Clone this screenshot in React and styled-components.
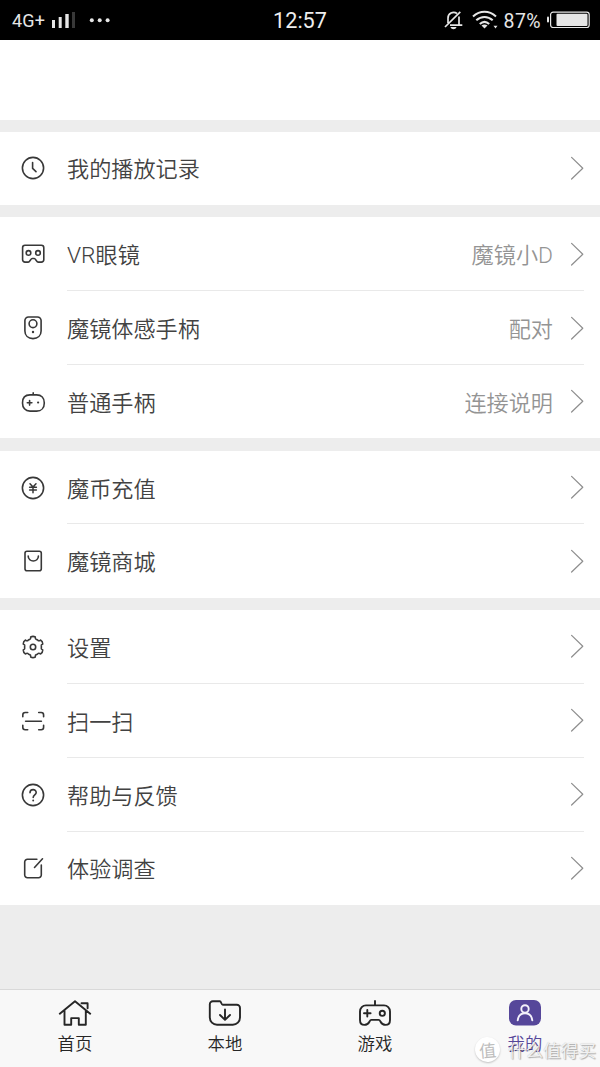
import React from 'react';
import styled, { createGlobalStyle, css } from 'styled-components';

const GlobalStyle = createGlobalStyle`
  * {
    box-sizing: border-box;
  }
  body {
    margin: 0;
    background: #ededed;
    font-family: 'Noto Sans CJK SC', sans-serif;
    font-weight: 350;
  }
`;

const Page = styled.div`
  display: flex;
  flex-direction: column;
  width: 600px;
  height: 1067px;
  overflow: hidden;
  background: #ededed;
`;

const StatusBar = styled.div`
  display: grid;
  grid-template-columns: 1fr auto 1fr;
  align-items: center;
  flex: none;
  height: 40px;
  padding: 0 10px 0 12px;
  background: #000;
  color: #e6e6e6;
  font-family: Roboto, sans-serif;
  font-weight: 400;
`;

const StatusGroup = styled.div`
  display: flex;
  align-items: center;
  justify-content: ${(props) => (props.$end ? 'flex-end' : 'flex-start')};
`;

const Network = styled.span`
  width: 39px;
  font-size: 18px;
  letter-spacing: 0.2px;
`;

const Clock = styled.span`
  padding: 2px 2px 0 0;
  font-size: 21.6px;
  line-height: 38px;
  color: #eee;
`;

const Percent = styled.span`
  margin: 0 6px 0 6px;
  padding-top: 2px;
  font-size: 19.5px;
  letter-spacing: 0.4px;
`;

const Header = styled.div`
  flex: none;
  height: 79.55px;
  background: #fff;
`;

const Section = styled.div`
  flex: none;
  margin-top: 12.22px;
  background: #fff;
`;

const Row = styled.div`
  display: flex;
  height: ${(props) => (props.$last ? '73.33px' : '73.89px')};
  padding: 0 16px 0 20px;
`;

const IconBox = styled.div`
  display: flex;
  align-items: center;
  width: 47px;
`;

const RowBody = styled.div`
  display: flex;
  align-items: center;
  flex: 1;
  border-bottom: 1px solid ${(props) => (props.$last ? 'transparent' : '#e9e9e9')};
`;

const Label = styled.span`
  flex: 1;
  padding-bottom: 1px;
  font-size: 22.15px;
  line-height: 32px;
  color: #424242;
`;

const Value = styled.span`
  padding-bottom: 1px;
  margin-right: 17px;
  font-size: 22.15px;
  line-height: 32px;
  color: #949494;
`;

const Latin = styled.span`
  font-family: Roboto, sans-serif;
  font-size: 22.8px;
  font-weight: ${(props) => props.$weight || 300};
  line-height: 1;
`;

const LineIcon = styled.svg`
  display: block;
  fill: none;
  stroke: ${(props) => props.$color || '#383838'};
  stroke-width: ${(props) => props.$weight || 1.6};
  stroke-linecap: round;
  stroke-linejoin: round;
`;

const TabBar = styled.div`
  display: flex;
  flex: none;
  height: 78px;
  margin-top: auto;
  border-top: 1px solid #d9d9d9;
  background: #f8f8f8;
`;

const Tab = styled.div`
  display: flex;
  flex-direction: column;
  align-items: center;
  flex: 1;
  padding-top: 8px;
  color: #262626;
  ${(props) =>
    props.$active &&
    css`
      color: #56479a;
    `}
`;

const TabLabel = styled.span`
  margin-top: 2px;
  font-size: 17.4px;
  line-height: 25px;
`;

// lies over the right end of the tab bar
const Watermark = styled.div`
  position: absolute;
  left: 475px;
  top: 1036px;
  display: flex;
  align-items: center;
  gap: 8px;
  width: 125px;
  height: 26px;
  white-space: nowrap;
  font-size: 17.6px;
  font-weight: 400;
  color: rgba(250, 250, 250, 0.9);
  text-shadow: 1px 1px 1px rgba(0, 0, 0, 0.28), 0 0 1px rgba(0, 0, 0, 0.25);
`;

const Seal = styled.span`
  display: flex;
  align-items: center;
  justify-content: center;
  width: 25px;
  height: 25px;
  border-radius: 50%;
  background: #fff;
  box-shadow: 0 1px 2px rgba(0, 0, 0, 0.22);
  color: #bdbdbd;
  font-size: 17px;
  transform: rotate(-5deg);
  text-shadow: none;
`;

const gearPath = () => {
  const at = (deg, r) => {
    const a = (deg * Math.PI) / 180;
    return `${(13 + r * Math.cos(a)).toFixed(2)} ${(13 + r * Math.sin(a)).toFixed(2)}`;
  };
  let d = `M${at(-103, 10.2)}`;
  for (let i = 0; i < 6; i++) {
    const a = -90 + i * 60;
    d += `Q${at(a, 11.3)} ${at(a + 13, 10.2)}`;
    d += `Q${at(a + 15, 8.2)} ${at(a + 23, 8.3)}`;
    d += `Q${at(a + 30, 8.7)} ${at(a + 37, 8.3)}`;
    d += `Q${at(a + 45, 8.2)} ${at(a + 47, 10.2)}`;
  }
  return `${d}Z`;
};

const icons = {
  history: (
    <>
      <circle cx="13" cy="13" r="10.6" />
      <path d="M12.6 7.6v5.8l3.4 3.2" />
    </>
  ),
  glasses: (
    <>
      <path d="M5 4.3h16.4a2.4 2.4 0 0 1 2.4 2.4v12a2.4 2.4 0 0 1-2.4 2.4h-3.2c-1.6 0-2.6-3.600-4-3.600h-2c-1.400 0-2.400 3.600-4 3.600H5a2.400 2.400 0 0 1-2.400-2.400v-12A2.400 2.400 0 0 1 5 4.300z" />
      <circle cx="8.500" cy="11.900" r="2.300" />
      <circle cx="18" cy="11.900" r="2.300" />
    </>
  ),
  remote: (
    <>
      <path d="M8.500 2h9a3.600 3.600 0 0 1 3.600 3.600V16c0 4.600-3.300 7.600-8.100 7.600S4.900 20.600 4.900 16V5.600A3.600 3.600 0 0 1 8.500 2z" />
      <circle cx="13" cy="8.700" r="3.900" />
      <path d="M13 17v.1" strokeWidth="2.400" />
    </>
  ),
  gamepad: (
    <>
      <path d="M10 5.900h6.600c4.800 0 7.700 3.200 7.700 8s-2.900 8.200-7.700 8.200H10c-4.800 0-7.500-3.400-7.500-8.200s2.700-8 7.500-8zM13.200 5.500V3.900" />
      <path d="M9.600 11.500v4.600M7.300 13.800h4.600" />
      <path d="M18 13.600h.2" strokeWidth="2" />
    </>
  ),
  coin: (
    <>
      <circle cx="13" cy="13" r="10.600" />
      <path d="M10 8.800l3 3.200 3-3.200M13 12v5.800M9.600 12.300h6.800M9.600 14.900h6.800" strokeWidth="1.500" />
    </>
  ),
  bag: (
    <>
      <rect x="5" y="3.200" width="16.300" height="19.500" rx="2" />
      <path d="M8.200 8c0 6.600 10.200 6.600 10.200 0" />
    </>
  ),
  settings: (
    <>
      <path d={gearPath()} />
      <circle cx="13" cy="13" r="2.700" />
    </>
  ),
  scan: (
    <path d="M7.700 4.500H5.200a2.400 2.400 0 0 0-2.400 2.400v1.800M18.700 4.500h2.500a2.400 2.400 0 0 1 2.400 2.400v1.800M7.700 21.700H5.200a2.400 2.400 0 0 1-2.400-2.400v-2M18.700 21.700h2.500a2.400 2.400 0 0 0 2.400-2.400v-2M5.600 13.200h15.800" />
  ),
  help: (
    <>
      <circle cx="13" cy="13" r="10.600" />
      <path d="M10 10.800c0-4.200 6.200-4.100 6.200-.3 0 2.300-3 2.500-3 5" />
      <path d="M13.200 18.400v.1" strokeWidth="1.900" />
    </>
  ),
  survey: <path d="M16.900 4.300H7.400a2.700 2.700 0 0 0-2.700 2.700v13a2.700 2.700 0 0 0 2.700 2.700h11.200a2.700 2.700 0 0 0 2.700-2.700V10M22.500 3.800l-8 8.700" />,
};

const tabIcons = {
  home: (
    <path d="M2.800 15.700L18 3.300l15.200 12.400M7.500 12.500v14.300h6.700v-6.700h7.600v6.700h7V12.500M24.500 5.300h6.100v5" />
  ),
  local: (
    <>
      <path d="M5.800 3.200h7c1.600 0 1.300 3.600 3 3.600h14a3.200 3.200 0 0 1 3.200 3.200v9.500a7.200 7.200 0 0 1-7.200 7.200H10a7.200 7.200 0 0 1-7.200-7.200V6.200a3 3 0 0 1 3-3z" />
      <path d="M18 11.500v10.300M13 17l5 4.900 5-4.900" />
    </>
  ),
  games: (
    <>
      <path d="M9 7.400h18a6 6 0 0 1 6 6V22c0 2.900-1.800 4.900-4.400 4.900-5.500 0-4.500-5-7-5h-7.200c-2.500 0-1.500 5-7 5C4.800 26.900 3 24.900 3 22v-8.600a6 6 0 0 1 6-6zM18 7V3" />
      <path d="M10.300 12v6.600M7 15.300h6.600" />
      <circle cx="25.300" cy="15.300" r="2.600" />
    </>
  ),
  mine: (
    <>
      <rect x="2" y="2" width="32" height="25.600" rx="7" fill="#56479a" stroke="none" />
      <circle cx="18" cy="10.900" r="3.700" />
      <path d="M10.700 22.300c.6-4.600 3.300-7 7.300-7s6.700 2.400 7.300 7" />
    </>
  ),
};

const sections = [
  [{ icon: 'history', label: '我的播放记录' }],
  [
    { icon: 'glasses', label: <><Latin>VR</Latin>眼镜</>, value: <>魔镜小<Latin $weight={350}>D</Latin></> },
    { icon: 'remote', label: '魔镜体感手柄', value: '配对' },
    { icon: 'gamepad', label: '普通手柄', value: '连接说明' },
  ],
  [
    { icon: 'coin', label: '魔币充值' },
    { icon: 'bag', label: '魔镜商城' },
  ],
  [
    { icon: 'settings', label: '设置' },
    { icon: 'scan', label: '扫一扫' },
    { icon: 'help', label: '帮助与反馈' },
    { icon: 'survey', label: '体验调查' },
  ],
];

const tabs = [
  { icon: 'home', label: '首页' },
  { icon: 'local', label: '本地' },
  { icon: 'games', label: '游戏' },
  { icon: 'mine', label: '我的' },
];

const SignalIcon = () => (
  <svg width="60" height="20" viewBox="0 0 60 20" fill="#e6e6e6">
    <rect x="1" y="10" width="3" height="8" />
    <rect x="7.700" y="7" width="3" height="11" />
    <rect x="14.300" y="4" width="3.400" height="14" />
    <rect x="21" y="2" width="3" height="16" fill="#383838" />
    <circle cx="40.800" cy="10.300" r="2" />
    <circle cx="48.700" cy="10.300" r="2" />
    <circle cx="56.600" cy="10.300" r="2" />
  </svg>
);

const BellSvg = styled.svg`
  margin-right: 9px;
`;

const MutedBellIcon = () => (
  <BellSvg width="19" height="20" viewBox="0 0 19 20" fill="none" stroke="#e6e6e6" strokeWidth="1.700">
    <path d="M4 13V8.200a5.600 5.600 0 0 1 9-4.700M15 6.500v8.700M6 15.200h12.300M1 17L16.300 1.800" />
    <path d="M6.500 17h6c-.8 3-5.200 3-6 0z" fill="#e6e6e6" stroke="none" />
  </BellSvg>
);

const WifiIcon = () => (
  <svg width="26" height="20" viewBox="0 0 26 20" fill="none" stroke="#e6e6e6" strokeWidth="2.100">
    <path d="M1 6.500c7-6.300 16-6.300 23 0M4.300 10.300c5-4.500 11.400-4.500 16.400 0M7.800 14c3-2.800 6.400-2.800 9.400 0" />
    <path d="M9.500 15.500c2-1.400 4-1.400 6 0l-3 3z" fill="#e6e6e6" stroke="none" />
    <path d="M21.500 15.800h4l-2 2.800z" fill="#e6e6e6" stroke="none" />
  </svg>
);

const BatteryIcon = () => (
  <svg width="43" height="18" viewBox="0 0 43 18" fill="none">
    <rect x="0" y="5.500" width="2" height="6" rx="1" fill="#e6e6e6" />
    <rect x="3.600" y="1.100" width="38.600" height="15.400" rx="2.500" stroke="#e6e6e6" strokeWidth="1.200" />
    <rect x="9.500" y="2.700" width="31" height="12.200" rx="1" fill="#e6e6e6" />
  </svg>
);

const MenuRow = ({ item, last }) => (
  <Row $last={last}>
    <IconBox>
      <LineIcon width="26" height="26" viewBox="0 0 26 26">
        {icons[item.icon]}
      </LineIcon>
    </IconBox>
    <RowBody $last={last}>
      <Label>{item.label}</Label>
      {item.value && <Value>{item.value}</Value>}
      <LineIcon width="14" height="24" viewBox="0 0 14 24" $color="#8e8e8e" $weight={1.2}>
        <path d="M1.600 1.400l11.200 10.800L1.600 23" />
      </LineIcon>
    </RowBody>
  </Row>
);

const App = () => {
  return (
    <>
      <GlobalStyle />
      <Page>
        <StatusBar>
          <StatusGroup>
            <Network>4G+</Network>
            <SignalIcon />
          </StatusGroup>
          <Clock>12:57</Clock>
          <StatusGroup $end>
            <MutedBellIcon />
            <WifiIcon />
            <Percent>87%</Percent>
            <BatteryIcon />
          </StatusGroup>
        </StatusBar>
        <Header />
        {sections.map((items, i) => (
          <Section key={i}>
            {items.map((item, j) => (
              <MenuRow key={item.icon} item={item} last={j === items.length - 1} />
            ))}
          </Section>
        ))}
        <TabBar>
          {tabs.map((tab) => (
            <Tab key={tab.icon} $active={tab.icon === 'mine'}>
              <LineIcon
                width="36"
                height="30"
                viewBox="0 0 36 30"
                $color={tab.icon === 'mine' ? '#f3f1fa' : '#262626'}
                $weight={1.9}
              >
                {tabIcons[tab.icon]}
              </LineIcon>
              <TabLabel>{tab.label}</TabLabel>
            </Tab>
          ))}
        </TabBar>
        <Watermark>
          <Seal>值</Seal>
          什么值得买
        </Watermark>
      </Page>
    </>
  );
};

export default App;
